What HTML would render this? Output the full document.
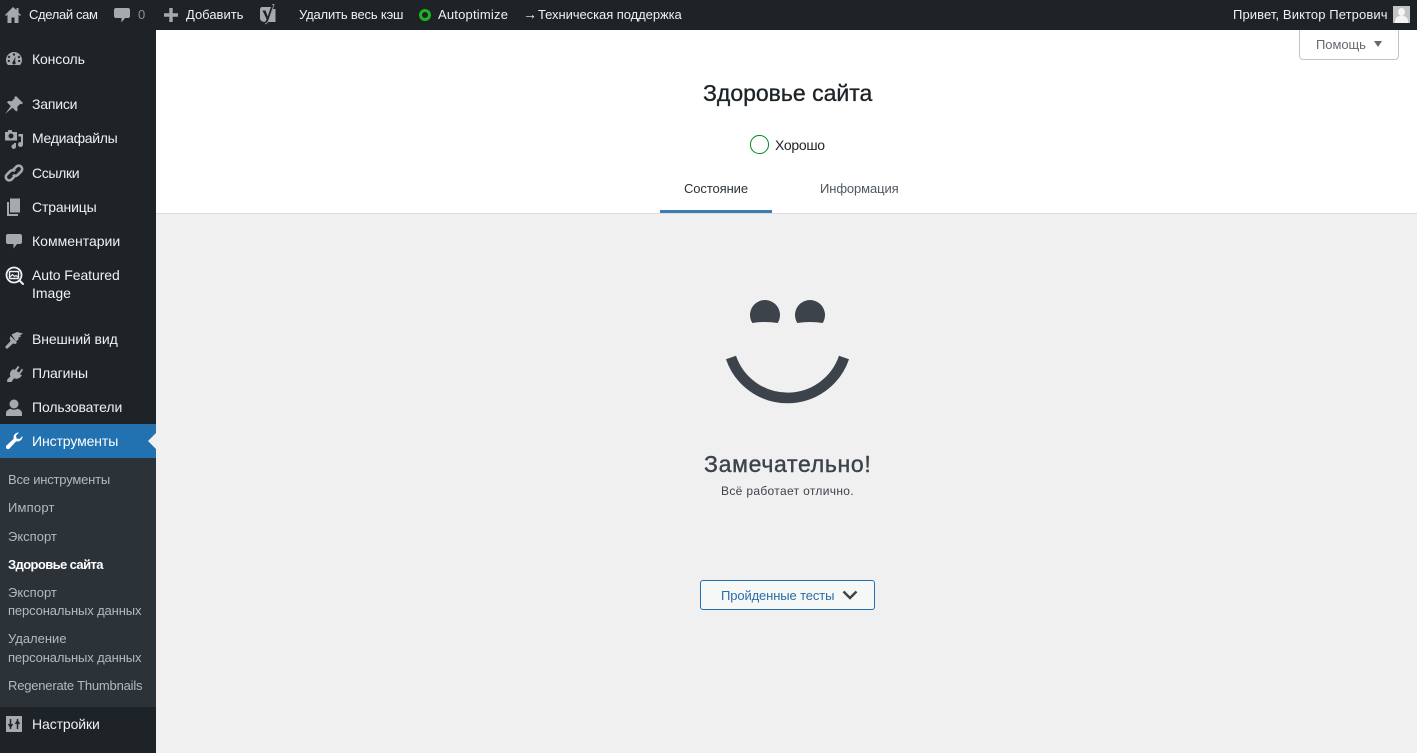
<!DOCTYPE html>
<html lang="ru"><head><meta charset="utf-8"><title>Здоровье сайта</title>
<style>
html,body{margin:0;padding:0;width:1417px;height:753px;overflow:hidden;background:#f0f0f1}
body{position:relative;font-family:"Liberation Sans","Noto Sans CJK SC",sans-serif;font-size:13px;color:#3c434a}
.a{position:absolute;white-space:nowrap}
.t{position:absolute;white-space:nowrap;line-height:18px;height:18px}
.m{color:#f0f0f1;font-size:14px}
.s{color:#b4b9be;font-size:13px}
.b{color:#f0f0f1;font-size:13px}
svg{position:absolute;overflow:visible}
.i{fill:#a7aaad}
</style></head><body>
<div class="a" style="left:0;top:0;width:1417px;height:30px;background:#1d2327"></div>
<div class="a" style="left:0;top:30px;width:156px;height:723px;background:#1d2327"></div>
<div class="a" style="left:156px;top:30px;width:1261px;height:183px;background:#fff"></div>
<div class="a" style="left:156px;top:213px;width:1261px;height:1px;background:#dcdcde"></div>
<div class="a" style="left:660px;top:210px;width:112px;height:3px;background:#3a7cb8"></div>

<!-- admin bar -->
<svg width="16" height="16" style="left:5px;top:7px" class="i" viewBox="0 0 16 16"><path d="M8 0L0 8l1 1 1.500-1.400V16h4V10.500h3V16h4V7.600L15 9l1-1-2.500-2.300V1h-2V3z"/></svg>
<div class="t b" style="left:29px;top:6px;letter-spacing:-.35px">Сделай сам</div>
<svg width="20" height="20" style="left:112px;top:5px" class="i" viewBox="0 0 20 20"><path d="M4 3h12c1.200 0 2 .8 2 2v6c0 1.200-.8 2-2 2h-3l-3.500 4.500V13H4c-1.200 0-2-.8-2-2V5c0-1.200.8-2 2-2z"/></svg>
<div class="t" style="left:138px;top:6px;color:#8c8f94">0</div>
<svg width="16" height="16" style="left:163px;top:7px" class="i" viewBox="0 0 16 16"><path d="M6.300 1h3.400v5.300H15v3.400H9.700V15H6.300V9.700H1V6.300h5.300z"/></svg>
<div class="t b" style="left:186px;top:6px">Добавить</div>
<svg width="20" height="22" style="left:258px;top:3px" viewBox="0 0 20 22"><path class="i" d="M4 4h10.500l-1 2H17.500V19H7.500C4 19 2 17.500 2 15V6.500C2 5 3 4 4 4z"/><path d="M4.500 7.500h3l2.300 6 2.200-7 2.500-5.500h2.500L11.500 15c-1 3-2 5-4 6.500H5.500v-2c2-.5 2.800-1.800 3-3.500z" fill="#1d2327"/><path d="M14 1.500h2l-5 15c-.8 2.500-2 4-4 4.500" fill="none" stroke="#a7aaad" stroke-width=".8"/></svg>
<div class="t b" style="left:299px;top:6px;letter-spacing:-.17px">Удалить весь кэш</div>
<div class="a" style="left:419px;top:9px;width:6px;height:6px;border:3px solid #1fb31f;border-radius:50%"></div>
<div class="t b" style="left:438px;top:6px;letter-spacing:.2px">Autoptimize</div>
<div class="t b" style="left:523px;top:5px;font-size:14px">→</div>
<div class="t b" style="left:538px;top:6px;letter-spacing:-.06px">Техническая поддержка</div>
<div class="t b" style="left:1233px;top:6px;letter-spacing:.1px">Привет, Виктор Петрович</div>
<div class="a" style="left:1393px;top:6px;width:17px;height:17px;background:#c4c4c4;overflow:hidden"><div class="a" style="left:5px;top:2px;width:7px;height:8px;border-radius:50%;background:#f4f4f4"></div><div class="a" style="left:2px;top:10px;width:13px;height:9px;border-radius:5px 5px 0 0;background:#f4f4f4"></div></div>

<!-- sidebar -->
<div class="a" style="left:0;top:424px;width:156px;height:34px;background:#2271b1"></div>
<div class="a" style="left:148px;top:433px;border:8px solid transparent;border-left:0;border-right-color:#f0f0f1"></div>
<div class="a" style="left:0;top:458px;width:156px;height:249px;background:#2c3338"></div>

<svg width="18" height="18" style="left:5px;top:50px" class="i" viewBox="0 0 18 18"><path fill-rule="evenodd" d="M9 2a8 8 0 0 0-8 8c0 2 .7 3.800 2 5h12c1.300-1.200 2-3 2-5a8 8 0 0 0-8-8zM8 3.500h2v2H8zM4 5.500l1.500 1.500-1.400 1.400-1.500-1.500zM2.800 10h2v2h-2zM13.200 10h2v2h-2zM14 5.500l1.400 1.400L14 8.400 12.500 7zM10.500 6.500l-.5 5a1.700 1.700 0 1 1-2 0z"/></svg>
<div class="t m" style="left:32px;top:50px;letter-spacing:-.15px">Консоль</div>
<svg width="20" height="20" style="left:4px;top:95px" class="i" viewBox="0 0 20 20"><path d="M12 1l7 7-1.500 1.200-1.200-.4-3 3 .3 3.500-1.300 1.200-3.800-3.800L1 19l5.800-7.900-3.800-3.800L4.200 6l3.500.3 3-3-.3-1.200z"/></svg>
<div class="t m" style="left:32px;top:95px;letter-spacing:-.2px">Записи</div>
<svg width="20" height="20" style="left:4px;top:129px" class="i" viewBox="0 0 20 20"><path fill-rule="evenodd" d="M1 3h2.500l1-2h3l1 2H13v8.500H1zM7 4.500a2.500 2.500 0 1 0 0 5 2.500 2.500 0 0 0 0-5zM14.500 5H19v10.500a2.500 2.500 0 1 1-2-2.400V7.500h-2.500zM12 14v3.500a2.300 2.300 0 1 1-2-2.200V14z"/></svg>
<div class="t m" style="left:32px;top:129px;letter-spacing:-.3px">Медиафайлы</div>
<svg width="20" height="20" style="left:4px;top:163px" viewBox="0 0 20 20" fill="none" stroke="#a7aaad" stroke-width="2.600"><path d="M9.500 6.500l3-3a3.400 3.400 0 0 1 4.800 4.800l-3.500 3.500a3.400 3.400 0 0 1-4.800 0"/><path d="M10.500 13.500l-3 3a3.400 3.400 0 0 1-4.800-4.800l3.500-3.500a3.400 3.400 0 0 1 4.800 0"/></svg>
<div class="t m" style="left:32px;top:164px;letter-spacing:-.35px">Ссылки</div>
<svg width="20" height="20" style="left:4px;top:197px" class="i" viewBox="0 0 20 20"><path d="M6 1.500h10v14H6zM3 5h2v12h9v2H3z"/></svg>
<div class="t m" style="left:32px;top:198px;letter-spacing:-.15px">Страницы</div>
<svg width="20" height="20" style="left:4px;top:231px" class="i" viewBox="0 0 20 20"><path d="M4 3h12c1.200 0 2 .8 2 2v6c0 1.200-.8 2-2 2h-3l-3.500 4.500V13H4c-1.200 0-2-.8-2-2V5c0-1.200.8-2 2-2z"/></svg>
<div class="t m" style="left:32px;top:232px">Комментарии</div>
<svg width="20" height="20" style="left:5px;top:266px" viewBox="0 0 20 20" fill="none" stroke="#f0f0f1"><circle cx="9" cy="9" r="7.500" stroke-width="1.800"/><path d="M14.500 14.500l3.500 3.500" stroke-width="2" stroke-linecap="round"/><rect x="4.500" y="5.500" width="9" height="7" rx="1" stroke-width="1.400"/><path d="M5 11l2.500-2.500 2 2 1.500-1 2 1.500" stroke-width="1.200"/></svg>
<div class="t m" style="left:32px;top:266px;letter-spacing:-.08px">Auto Featured</div>
<div class="t m" style="left:32px;top:284px">Image</div>
<svg width="20" height="20" style="left:4px;top:330px" class="i" viewBox="0 0 20 20"><path d="M7.500 4.500L13 2l6 1.500-3.500 2 2 .5-3.500 2 1 1-3 2.500zM6.500 6l6.500 6.500-1.500 1.500-2.500-.5L3 19l-2-2 5.500-6-.8-2.500z"/></svg>
<div class="t m" style="left:32px;top:330px;letter-spacing:-.1px">Внешний вид</div>
<svg width="20" height="20" style="left:5px;top:364px" class="i" viewBox="0 0 20 20"><path d="M13 2l1.500 1-2.800 4 2.300 1.500L17 4.500 18 6l-3 4.200 2 1.300-2 2c-2 1.500-4 1.700-6 .8l-2.500 3.700H2l.5-3 3-2.500C4.500 10 5 8.500 6 7l2-2 1.500 1z"/></svg>
<div class="t m" style="left:32px;top:364px;letter-spacing:-.12px">Плагины</div>
<svg width="20" height="20" style="left:4px;top:398px" class="i" viewBox="0 0 20 20"><circle cx="10" cy="6" r="4.500"/><path d="M2 18v-3c0-2.500 3-4 4.500-4.300 2 1.300 5 1.300 7 0C15 11 18 12.500 18 15v3z"/></svg>
<div class="t m" style="left:32px;top:398px;letter-spacing:-.1px">Пользователи</div>
<svg width="20" height="20" style="left:4px;top:431px" fill="#fff" viewBox="0 0 20 20"><path d="M18.500 5a5 5 0 0 1-6.300 5.300L5.500 17.500a2 2 0 0 1-3-3l7.200-6.700A5 5 0 0 1 15 1.500l-3 3 .5 3 3 .5z"/></svg>
<div class="t m" style="left:32px;top:432px;color:#fff;letter-spacing:-.1px">Инструменты</div>

<div class="t s" style="left:8px;top:471px;letter-spacing:-.2px">Все инструменты</div>
<div class="t s" style="left:8px;top:499px;letter-spacing:.2px">Импорт</div>
<div class="t s" style="left:8px;top:528px">Экспорт</div>
<div class="t" style="left:8px;top:556px;color:#fff;font-weight:700;letter-spacing:-.6px">Здоровье сайта</div>
<div class="t s" style="left:8px;top:584px">Экспорт</div>
<div class="t s" style="left:8px;top:602px;letter-spacing:-.13px">персональных данных</div>
<div class="t s" style="left:8px;top:630px">Удаление</div>
<div class="t s" style="left:8px;top:649px;letter-spacing:-.13px">персональных данных</div>
<div class="t s" style="left:8px;top:677px;letter-spacing:-.2px">Regenerate Thumbnails</div>

<svg width="16" height="16" style="left:6px;top:716px" viewBox="0 0 16 16"><rect width="16" height="16" fill="#a7aaad"/><path d="M4.500 3v7M2.500 8l2 3 2-3M4.500 11v2M11.500 13V6M9.500 8l2-3 2 3M11.500 5V3" stroke="#1d2327" stroke-width="1.500" fill="none"/></svg>
<div class="t m" style="left:32px;top:715px;letter-spacing:-.1px">Настройки</div>

<!-- header -->
<div class="a" style="left:1299px;top:30px;width:98px;height:29px;background:#fff;border:1px solid #c3c4c7;border-top:0;border-radius:0 0 4px 4px"></div>
<div class="t" style="left:1316px;top:36px;color:#646970;letter-spacing:-.05px">Помощь</div>
<div class="a" style="left:1374px;top:41px;border:4.500px solid transparent;border-top:6px solid #646970;border-bottom:0"></div>
<div class="t" style="left:703px;top:80px;height:27px;line-height:27px;font-size:23px;color:#1d2327;-webkit-text-stroke:.35px #1d2327">Здоровье сайта</div>
<div class="a" style="left:750px;top:135px;width:16.500px;height:16.500px;border:1.750px solid #008a20;border-radius:50%"></div>
<div class="t" style="left:775px;top:136px;font-size:14px;color:#1d2327;letter-spacing:-.3px">Хорошо</div>
<div class="t" style="left:684px;top:180px;color:#2c3338;letter-spacing:-.1px">Состояние</div>
<div class="t" style="left:820px;top:180px;color:#50575e;letter-spacing:-.1px">Информация</div>

<!-- smiley -->
<svg width="220" height="140" style="left:680px;top:280px" viewBox="0 0 220 140">
<path fill="#3c434a" d="M72.300 43A15 15 0 1 1 97.700 43Q85 41 72.300 43zM117.300 43A15 15 0 1 1 142.700 43Q130 41 117.300 43z"/>
<path fill="none" stroke="#3c434a" stroke-width="10.600" d="M51 77.500A59.700 59.700 0 0 0 164 77.500"/>
</svg>
<div class="t" style="left:704px;top:448px;height:32px;line-height:32px;font-size:23px;font-weight:400;color:#3c434a;-webkit-text-stroke:.4px #3c434a;letter-spacing:.7px">Замечательно!</div>
<div class="t" style="left:721px;top:482px;font-size:12px;letter-spacing:.33px">Всё работает отлично.</div>
<div class="a" style="left:700px;top:580px;width:173px;height:28px;background:#f6f7f7;border:1px solid #2271b1;border-radius:3px"></div>
<div class="t" style="left:721px;top:587px;color:#2a6ea6;font-size:13px;letter-spacing:-.12px">Пройденные тесты</div>
<svg width="16" height="10" style="left:842px;top:590px" viewBox="0 0 16 10"><path d="M1.500 1.500L8 8l6.500-6.500" fill="none" stroke="#3c434a" stroke-width="2.400"/></svg>
</body></html>
